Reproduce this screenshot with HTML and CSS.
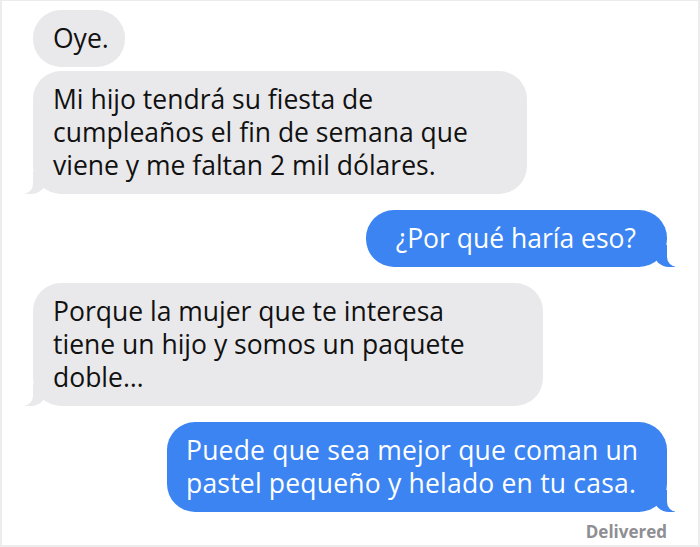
FILE: index.html
```html
<!DOCTYPE html>
<html lang="es">
<head>
  <meta charset="UTF-8" />
  <title>Mensajes</title>
  <link rel="stylesheet" href="styles.css">
</head>
<body>
  <main class="chat">
    <div class="msg them short">Oye.</div>
    <div class="msg them same tail w-fiesta">Mi hijo tendrá su fiesta de<br>cumpleaños el fin de semana que<br>viene y me faltan 2 mil dólares.</div>
    <div class="msg me wide">¿Por qué haría eso?</div>
    <div class="msg them tail w-paquete">Porque la mujer que te interesa<br>tiene un hijo y somos un paquete<br>doble…</div>
    <div class="msg me w-pastel">Puede que sea mejor que coman un<br>pastel pequeño y helado en tu casa.</div>
    <p class="status">Delivered</p>
  </main>
</body>
</html>
```

FILE: styles.css
```css
html, body {
  margin: 0;
  background: #fff;
}

.chat {
  box-sizing: border-box;
  width: 700px;
  height: 547px;
  border: 2px solid #ececec;
  border-top-width: 1px;
  padding: 9px 31px 0 31px;
  display: flex;
  flex-direction: column;
  font-family: "Open Sans", sans-serif;
  overflow: hidden;
}

.msg {
  position: relative;
  padding: 12px 20px;
  border-radius: 28px;
  font-size: 26.5px;
  line-height: 33px;
  margin-top: 16px;
  white-space: nowrap;
}

.msg:first-child {
  margin-top: 0;
}

.msg.same {
  margin-top: 4px;
}

.msg.short {
  padding-right: 16px;
}

.msg.wide {
  padding-left: 30px;
  padding-right: 31px;
}

.w-fiesta {
  box-sizing: border-box;
  width: 494px;
}

.w-paquete {
  box-sizing: border-box;
  width: 510px;
}

.w-pastel {
  box-sizing: border-box;
  width: 500px;
  padding-left: 19px;
  letter-spacing: 0.2px;
}

.them {
  align-self: flex-start;
  background: #e9e9eb;
  color: #111;
}

.me {
  align-self: flex-end;
  background: #3b84f2;
  color: #fff;
}

/* colita de la burbuja */
.msg::before,
.msg::after {
  content: "";
  position: absolute;
  bottom: 0;
  height: 22px;
}

.them.tail::before {
  left: -8px;
  width: 22px;
  background: #e9e9eb;
  border-bottom-right-radius: 16px;
}

.them.tail::after {
  left: -11px;
  width: 11px;
  background: #fff;
  border-bottom-right-radius: 10px;
}

.me::before {
  right: -8px;
  width: 22px;
  background: #3b84f2;
  border-bottom-left-radius: 16px;
}

.me::after {
  right: -11px;
  width: 11px;
  background: #fff;
  border-bottom-left-radius: 10px;
}

.status {
  align-self: flex-end;
  margin: 8px 0 0;
  font-size: 17px;
  font-weight: bold;
  color: #8e8e93;
}
```
